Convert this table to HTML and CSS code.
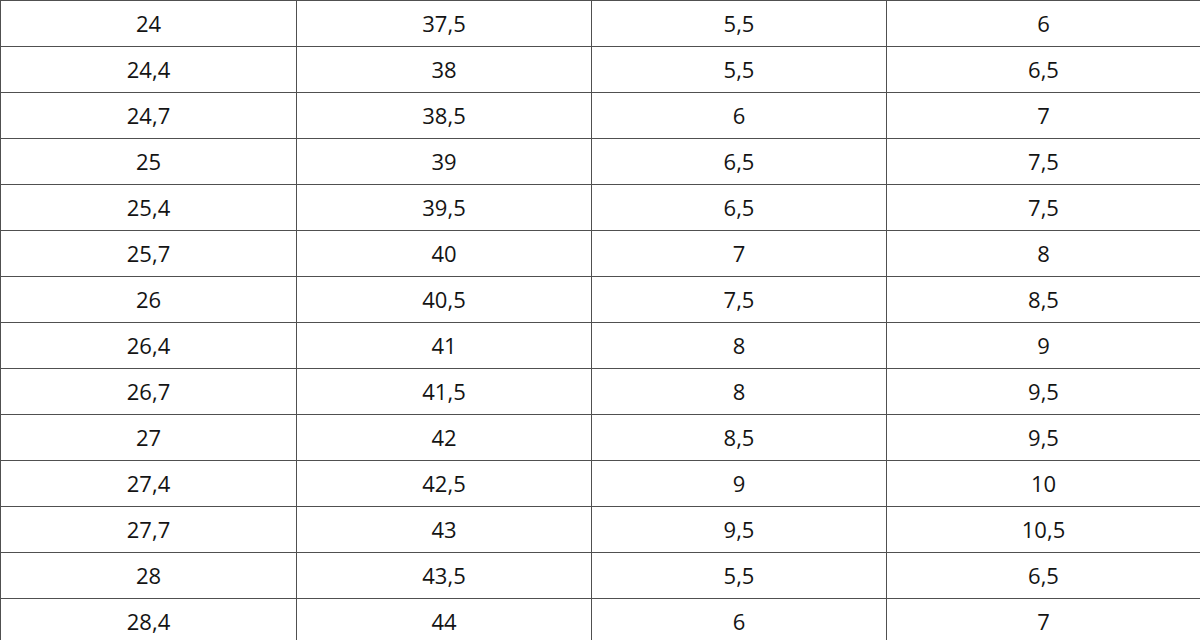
FILE: index.html
```html
<!DOCTYPE html>
<html>
<head>
<meta charset="utf-8">
<link rel="stylesheet" href="styles.css">
</head>
<body>
<table class="sizes">
<colgroup>
<col class="c1"><col class="c2"><col class="c3"><col class="c4">
</colgroup>
<tbody>
<tr><td>24</td><td>37,5</td><td>5,5</td><td>6</td></tr>
<tr><td>24,4</td><td>38</td><td>5,5</td><td>6,5</td></tr>
<tr><td>24,7</td><td>38,5</td><td>6</td><td>7</td></tr>
<tr><td>25</td><td>39</td><td>6,5</td><td>7,5</td></tr>
<tr><td>25,4</td><td>39,5</td><td>6,5</td><td>7,5</td></tr>
<tr><td>25,7</td><td>40</td><td>7</td><td>8</td></tr>
<tr><td>26</td><td>40,5</td><td>7,5</td><td>8,5</td></tr>
<tr><td>26,4</td><td>41</td><td>8</td><td>9</td></tr>
<tr><td>26,7</td><td>41,5</td><td>8</td><td>9,5</td></tr>
<tr><td>27</td><td>42</td><td>8,5</td><td>9,5</td></tr>
<tr><td>27,4</td><td>42,5</td><td>9</td><td>10</td></tr>
<tr><td>27,7</td><td>43</td><td>9,5</td><td>10,5</td></tr>
<tr><td>28</td><td>43,5</td><td>5,5</td><td>6,5</td></tr>
<tr><td>28,4</td><td>44</td><td>6</td><td>7</td></tr>
</tbody>
</table>
</body>
</html>
```

FILE: styles.css
```css
html, body {
  margin: 0;
  padding: 0;
  background: #ffffff;
}
.sizes {
  width: 1200px;
  border-collapse: collapse;
  table-layout: fixed;
  font-family: "Open Sans", "Liberation Sans", sans-serif;
  font-size: 22px;
  color: #141414;
}
.c1 { width: 296px; }
.c2 { width: 295px; }
.c3 { width: 295px; }
.c4 { width: 314px; }
.sizes td {
  border: 1px solid #505050;
  height: 46px;
  padding: 0 0 2px 0;
  text-align: center;
  vertical-align: middle;
  box-sizing: border-box;
}
```
